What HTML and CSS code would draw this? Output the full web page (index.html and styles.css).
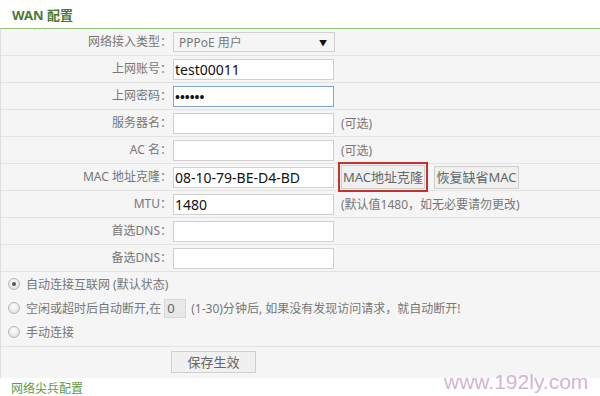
FILE: index.html
```html
<!DOCTYPE html>
<html lang="zh">
<head>
<meta charset="utf-8">
<link rel="stylesheet" href="styles.css">
</head>
<body>
<div class="page">
  <h2 class="title">WAN 配置</h2>
  <div class="form">
    <div class="row">
      <label class="lbl">网络接入类型：</label>
      <div class="select"><span>PPPoE 用户</span><span class="arrow">▼</span></div>
    </div>
    <div class="row">
      <label class="lbl">上网账号：</label>
      <div class="input">test00011</div>
    </div>
    <div class="row">
      <label class="lbl">上网密码：</label>
      <div class="input focus"><span class="dots">••••••</span></div>
    </div>
    <div class="row">
      <label class="lbl">服务器名：</label>
      <div class="input"></div><span class="note">(可选)</span>
    </div>
    <div class="row">
      <label class="lbl">AC 名：</label>
      <div class="input"></div><span class="note">(可选)</span>
    </div>
    <div class="row">
      <label class="lbl">MAC 地址克隆：</label>
      <div class="input">08-10-79-BE-D4-BD</div>
      <span class="hl"><span class="btn">MAC地址克隆</span></span>
      <span class="btn btn2">恢复缺省MAC</span>
    </div>
    <div class="row">
      <label class="lbl">MTU：</label>
      <div class="input">1480</div><span class="note">(默认值1480，如无必要请勿更改)</span>
    </div>
    <div class="row">
      <label class="lbl">首选DNS：</label>
      <div class="input"></div>
    </div>
    <div class="row">
      <label class="lbl">备选DNS：</label>
      <div class="input"></div>
    </div>
    <div class="radios">
      <div class="radio-line"><span class="radio on"></span>自动连接互联网 (默认状态)</div>
      <div class="radio-line"><span class="radio"></span>空闲或超时后自动断开,在<span class="mini">0</span>(1-30)分钟后, 如果没有发现访问请求，就自动断开!</div>
      <div class="radio-line"><span class="radio"></span>手动连接</div>
    </div>
    <div class="save-row">
      <span class="btn save">保存生效</span>
    </div>
  </div>
  <h3 class="sub">网络尖兵配置</h3>
  <div class="wm">www.192ly.com</div>
</div>
</body>
</html>
```

FILE: styles.css
```css
* { box-sizing: border-box; }
html, body { margin: 0; padding: 0; background: #fff; }
body {
  font-family: "Noto Sans", "Noto Sans CJK SC", sans-serif;
  font-size: 12px;
  color: #666;
  width: 600px;
  height: 396px;
  overflow: hidden;
}
.page { position: relative; }
.title {
  margin: 0;
  height: 28px;
  padding-left: 12px;
  font-size: 13px;
  font-weight: bold;
  line-height: 30px;
  color: #4a7a35;
}
.form {
  border-top: 1px solid #8fbf72;
  border-left: 1px solid #dedede;
  background: #f5f5f5;
}
.row {
  display: flex;
  align-items: center;
  height: 27px;
  border-bottom: 1px solid #e3e3e3;
}
.lbl {
  width: 171px;
  text-align: right;
  color: #777;
  font-size: 12px;
  line-height: 16px;
  flex: none;
}
.select {
  margin-left: 1px;
  width: 162px;
  height: 20px;
  border: 1px solid #d0d0d0;
  background: #f5f5f5;
  display: flex;
  justify-content: space-between;
  align-items: center;
  padding: 0 7px 0 5px;
  color: #777;
  font-size: 12px;
}
.arrow { color: #111; font-size: 8px; }
.input {
  margin-left: 1px;
  width: 161px;
  height: 21px;
  border: 1px solid #d0d0d0;
  background: #fff;
  color: #111;
  font-size: 14px;
  line-height: 19px;
  padding-left: 1px;
  flex: none;
}
.input.focus { border-color: #7ea6cf; }
.dots { font-size: 13px; font-weight: bold; letter-spacing: 0; color: #111; }
.note { margin-left: 7px; color: #777; }
.hl {
  margin-left: 4px;
  border: 2px solid #c8302c;
  padding: 1px;
  display: flex;
}
.btn {
  display: inline-block;
  height: 24px;
  border: 1px solid #cfcfcf;
  background: #f0f0f0;
  color: #666;
  font-size: 13px;
  line-height: 22px;
  text-align: center;
}
.hl .btn { width: 84px; }
.btn2 { margin-left: 6px; width: 85px; height: 23px; line-height: 21px; }
.radios {
  padding-bottom: 2px;
  border-bottom: 1px solid #e3e3e3;
}
.radio-line {
  height: 24px;
  display: flex;
  align-items: center;
  padding-left: 7px;
  color: #777;
  font-size: 12px;
}
.radio {
  width: 12px;
  height: 12px;
  border-radius: 50%;
  border: 1px solid #b8b8b8;
  background: radial-gradient(circle at 50% 35%, #fdfdfd, #dcdcdc);
  margin-right: 6px;
  position: relative;
  flex: none;
}
.radio.on::after {
  content: "";
  position: absolute;
  left: 3px; top: 3px;
  width: 4px; height: 4px;
  border-radius: 50%;
  background: #555;
}
.mini {
  display: inline-block;
  width: 22px;
  height: 19px;
  margin: 0 5px 0 3px;
  background: #e8e8e8;
  border: 1px solid #d8d8d8;
  color: #666;
  font-size: 13px;
  line-height: 17px;
  padding-left: 2px;
}
.save-row {
  height: 31px;
  padding: 4px 0 0 170px;
}
.save-row .save { width: 85px; height: 22px; line-height: 20px; font-size: 13px; }
.sub {
  margin: 0;
  padding: 3px 0 0 11px;
  font-size: 12px;
  font-weight: normal;
  color: #5f9c42;
  line-height: 16px;
}
.wm {
  position: absolute;
  left: 444px;
  top: 370px;
  font-family: "Liberation Sans", Arial, sans-serif;
  font-size: 21px;
  color: #d2b6d6;
}
```
